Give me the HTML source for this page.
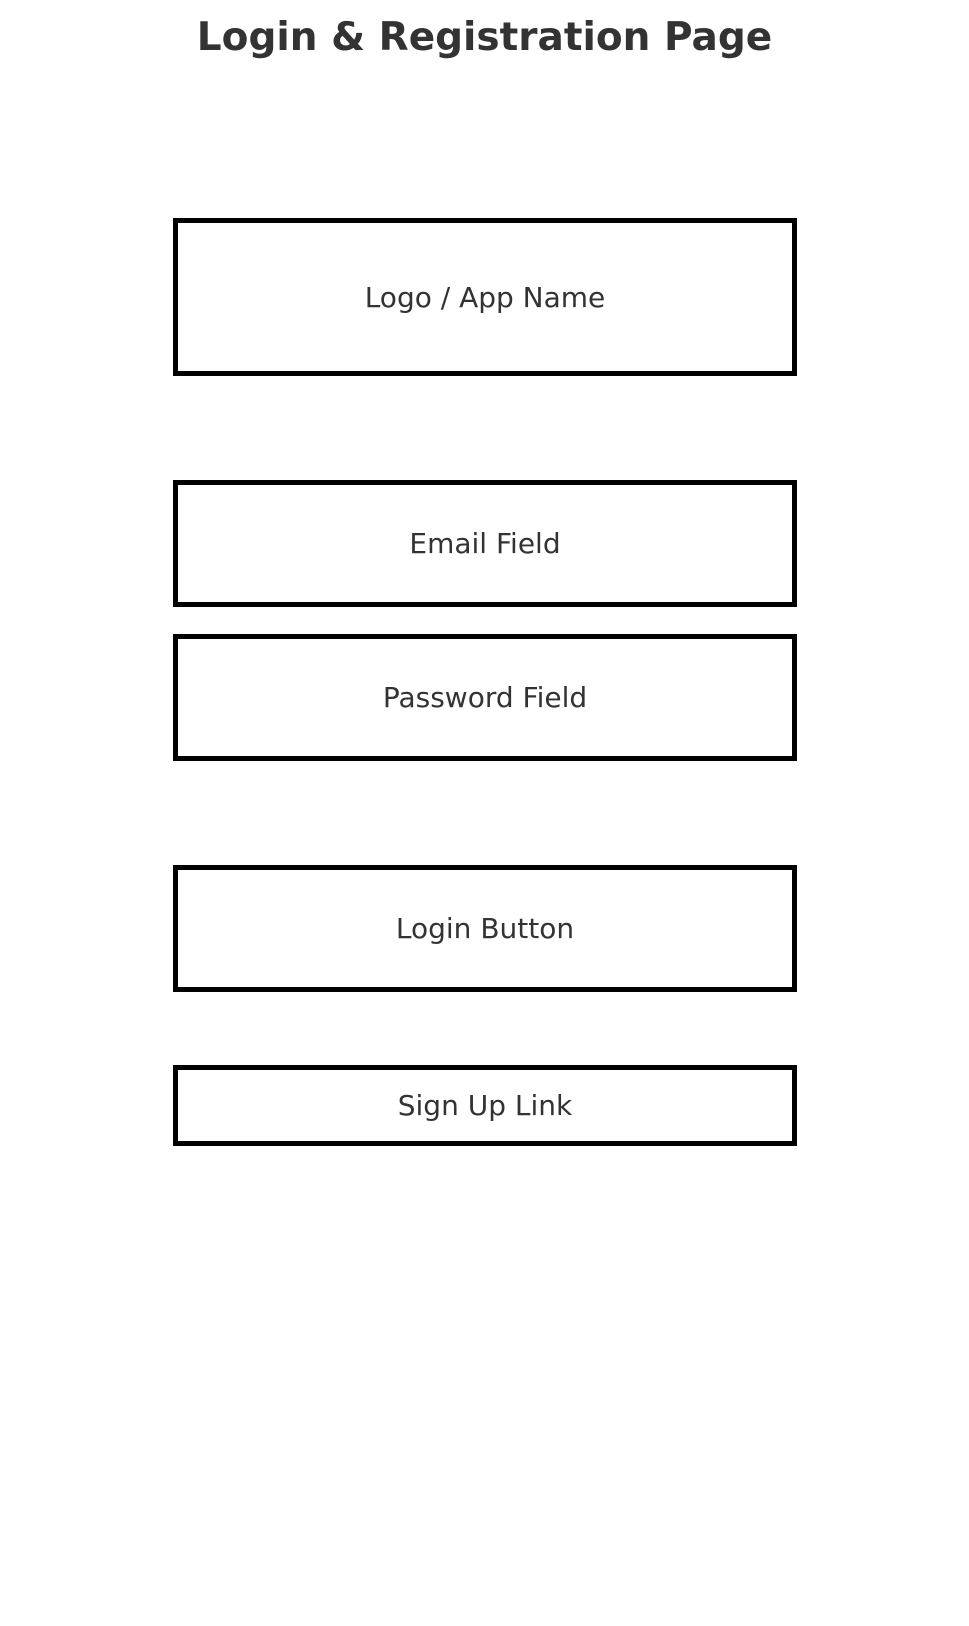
<!DOCTYPE html>
<html><head><style>
html,body{margin:0;padding:0;background:#fff;width:969px;height:1626px;overflow:hidden;font-family:"DejaVu Sans","Liberation Sans",sans-serif;color:#333}
h1{position:absolute;left:0;width:969px;top:15px;margin:0;text-align:center;font-size:39px;font-weight:bold;line-height:46px}
.b{position:absolute;left:173px;width:614px;border:5px solid #000;display:flex;align-items:center;justify-content:center;font-size:28px}
</style></head><body>
<h1>Login &amp; Registration Page</h1>
<div class="b" style="top:218px;height:148px">Logo / App Name</div>
<div class="b" style="top:480px;height:117px">Email Field</div>
<div class="b" style="top:634px;height:117px">Password Field</div>
<div class="b" style="top:865px;height:117px">Login Button</div>
<div class="b" style="top:1065px;height:71px">Sign Up Link</div>
</body></html>
